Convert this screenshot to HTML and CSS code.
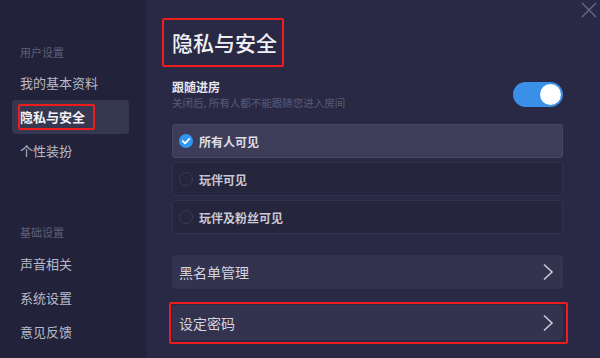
FILE: index.html
```html
<!DOCTYPE html>
<html lang="zh">
<head>
<meta charset="utf-8">
<link rel="stylesheet" href="styles.css">
</head>
<body>
<div class="app">
  <aside class="sidebar">
    <div class="group-label first">用户设置</div>
    <div class="nav-item">我的基本资料</div>
    <div class="nav-item active"><span class="mark">隐私与安全</span></div>
    <div class="nav-item">个性装扮</div>
    <div class="group-label second">基础设置</div>
    <div class="nav-item">声音相关</div>
    <div class="nav-item">系统设置</div>
    <div class="nav-item">意见反馈</div>
  </aside>
  <main class="main">
    <button class="close" aria-label="关闭">
      <svg width="16" height="16" viewBox="0 0 16 16"><path d="M1 1L15 15M15 1L1 15" stroke="#6b6d86" stroke-width="1.3" fill="none"/></svg>
    </button>
    <h1 class="title"><span class="mark title-mark">隐私与安全</span></h1>
    <div class="follow">
      <div class="follow-text">
        <div class="follow-name">跟随进房</div>
        <div class="follow-desc">关闭后, 所有人都不能跟随您进入房间</div>
      </div>
      <div class="toggle on"><div class="knob"></div></div>
    </div>
    <div class="options">
      <div class="option selected">
        <span class="radio checked">
          <svg width="14" height="14" viewBox="0 0 14 14"><circle cx="7" cy="7" r="7" fill="#2f97ef"/><path d="M3.8 7.2L6.1 9.4L10.3 4.9" stroke="#fff" stroke-width="1.8" fill="none" stroke-linecap="round" stroke-linejoin="round"/></svg>
        </span>
        <span class="opt-text">所有人可见</span>
      </div>
      <div class="option">
        <span class="radio"></span>
        <span class="opt-text">玩伴可见</span>
      </div>
      <div class="option">
        <span class="radio"></span>
        <span class="opt-text">玩伴及粉丝可见</span>
      </div>
    </div>
    <div class="link-row blacklist">
      <span>黑名单管理</span>
      <svg class="chev" width="12" height="18" viewBox="0 0 12 18"><path d="M2 1.5L10 9L2 16.5" stroke="#c9cad6" stroke-width="1.6" fill="none"/></svg>
    </div>
    <div class="pw-mark">
      <div class="link-row">
        <span>设定密码</span>
        <svg class="chev" width="12" height="18" viewBox="0 0 12 18"><path d="M2 1.5L10 9L2 16.5" stroke="#c9cad6" stroke-width="1.6" fill="none"/></svg>
      </div>
    </div>
  </main>
</div>
</body>
</html>
```
FILE: styles.css
```css
* { box-sizing: border-box; }
html, body { margin: 0; padding: 0; }
body {
  width: 600px;
  height: 358px;
  overflow: hidden;
  font-family: "Noto Sans CJK SC", "Noto Sans", sans-serif;
  background: #292945;
}
.app {
  display: flex;
  width: 600px;
  height: 358px;
}
.sidebar {
  width: 147px;
  flex: none;
  background: #22223a;
  border-right: 1px solid #26263f;
  display: flex;
  flex-direction: column;
}
.group-label {
  height: 20px;
  line-height: 20px;
  font-size: 11px;
  color: #5f6079;
  padding-left: 20px;
}
.group-label.first { margin-top: 42px; margin-bottom: 4px; }
.group-label.second { margin-top: 54px; margin-bottom: 5px; }
.nav-item {
  height: 34px;
  line-height: 34px;
  font-size: 13px;
  color: #b9bac8;
  padding-left: 20px;
}
.nav-item.active {
  margin: 0 17px 0 12px;
  padding-left: 6px;
  background: #363750;
  border-radius: 4px;
  color: #f2f2f6;
  font-weight: 700;
  display: flex;
  align-items: center;
}
.mark {
  border: 2px solid #ee1c1c;
  border-radius: 2px;
}
.nav-item.active .mark {
  display: block;
  height: 26px;
  line-height: 22px;
  width: 77px;
  padding: 0;
  white-space: nowrap;
}
.main {
  flex: 1;
  position: relative;
  padding: 18px 37px 0 25px;
  display: flex;
  flex-direction: column;
}
.close {
  position: absolute;
  top: 2px;
  right: 3px;
  width: 16px;
  height: 16px;
  padding: 0;
  border: 0;
  background: none;
}
.title {
  margin: 0 0 0 -10px;
  font-size: 21px;
  font-weight: 500;
  color: #f0f0f4;
  line-height: 1;
}
.title-mark {
  display: inline-block;
  height: 49px;
  width: 122px;
  line-height: 45px;
  padding-left: 8px;
}
.follow {
  display: flex;
  align-items: center;
  justify-content: space-between;
  margin-top: 12px;
}
.follow-name {
  font-size: 12px;
  font-weight: 700;
  color: #e6e6ee;
  line-height: 16px;
}
.follow-desc {
  font-size: 10.5px;
  color: #595b76;
  line-height: 16px;
}
.toggle {
  width: 50px;
  height: 25px;
  border-radius: 13px;
  background: #3a8fe8;
  position: relative;
  margin-top: -2px;
}
.knob {
  position: absolute;
  top: 2px;
  right: 2px;
  width: 21px;
  height: 21px;
  border-radius: 50%;
  background: #ffffff;
}
.options {
  margin-top: 13px;
  display: flex;
  flex-direction: column;
  gap: 4px;
}
.option {
  height: 34px;
  border: 1px solid #31324b;
  background: #25253e;
  border-radius: 3px;
  display: flex;
  align-items: center;
  padding-left: 6px;
}
.option.selected {
  background: #3d3d59;
  border-color: #46475f;
}
.radio {
  width: 14px;
  height: 14px;
  border-radius: 50%;
  border: 1px solid #3a3b55;
  display: inline-flex;
}
.radio.checked { border: 0; }
.opt-text {
  margin-left: 6px;
  font-size: 12px;
  font-weight: 700;
  color: #dddde6;
}
.option:not(.selected) .opt-text { color: #c8c9d4; }
.link-row {
  height: 34px;
  background: #33334f;
  border-radius: 4px;
  display: flex;
  align-items: center;
  justify-content: space-between;
  padding: 0 9px 0 7px;
  font-size: 14px;
  color: #d2d3de;
}
.blacklist { margin-top: 21px; }
.pw-mark {
  margin: 13px -5px 0 -3px;
  border: 2px solid #ee1c1c;
  border-radius: 2px;
  padding: 1px 3px 2px 1px;
}
.pw-mark .link-row { height: 35px; }
```
